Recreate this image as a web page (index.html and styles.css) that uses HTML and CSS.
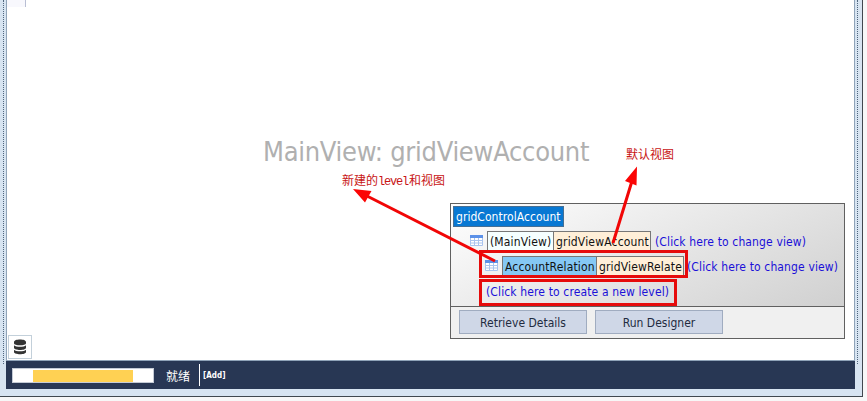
FILE: index.html
```html
<!DOCTYPE html>
<html lang="zh-CN">
<head>
<meta charset="utf-8">
<title>gridControlAccount</title>
<link rel="stylesheet" href="styles.css">
</head>
<body>
<div class="window">
  <main class="surface">
    <div class="tab-edge"></div>
    <h1 class="view-title">MainView: gridViewAccount</h1>
    <button class="data-button" aria-label="Data source">
      <svg width="14" height="16" viewBox="0 0 14 16"><path fill="#333" d="M1 3C1-.3 13-.3 13 3v1.300C13 7 1 7 1 4.300zM1 6.200c2 2 10 2 12 0v2.600c0 3-12 3-12 0zM1 10.800c2 2 10 2 12 0v2.100c0 3-12 3-12 0z"/></svg>
    </button>
    <section class="levels">
      <div class="tree">
        <span class="root">gridControlAccount</span>
        <div class="row main-row">
          <svg class="grid-icon" width="13" height="11"><path fill="#fff" stroke="#a9c4ee" d="M.5.5h12v10H.5zM4.500 3v8M8.500 3v8M1 5.500h12M1 8h12"/><path fill="#5c91e8" d="M0 0h13v3H0z"/></svg>
          <span class="cell name">(MainView)</span><span class="cell view v1">gridViewAccount</span>
          <a class="link">(Click here to change view)</a>
        </div>
        <div class="row child-row">
          <svg class="grid-icon" width="13" height="11"><path fill="#fff" stroke="#a9c4ee" d="M.5.5h12v10H.5zM4.500 3v8M8.500 3v8M1 5.500h12M1 8h12"/><path fill="#5c91e8" d="M0 0h13v3H0z"/></svg>
          <span class="cell relation">AccountRelation</span><span class="cell view v2">gridViewRelate</span>
          <a class="link">(Click here to change view)</a>
        </div>
        <div class="row new-row"><a class="link">(Click here to create a new level)</a></div>
      </div>
      <div class="actions">
        <button>Retrieve Details</button>
        <button>Run Designer</button>
      </div>
    </section>
  </main>
  <footer class="status">
    <div class="progress"><div class="bar"></div></div>
    <span class="ready">就绪</span>
    <span class="mode">[Add]</span>
  </footer>
</div>
<svg class="marks" width="867" height="401" viewBox="0 0 867 401">
  <g fill="none" stroke="#e60b0b" stroke-width="3"><path d="M480.500 251.500h206v25h-206zM480.500 280.500h195v24h-195z"/></g>
  <g stroke="#f10606" stroke-width="3"><path d="M495 261L367 196M613 243L632 181"/></g>
  <path fill="#fb0505" d="M353 189l18.500 2-6.500 11.500zM637 166.500l-12 14.500 11.500 4.500z"/>
</svg>
<span class="note note-new">新建的<span class="latin">level</span>和视图</span>
<span class="note note-default">默认视图</span>
</body>
</html>
```
FILE: styles.css
```css
* { box-sizing: border-box; }
body {
  margin: 0;
  width: 867px;
  height: 401px;
  overflow: hidden;
  position: relative;
  background: #f7f7f7;
  font: 12px/16px "DejaVu Sans Condensed", "Noto Sans CJK SC", sans-serif;
  color: #111;
}
.window {
  width: 863px;
  height: 397px;
  padding: 0 7px 7px 6px;
  border-right: 1px solid #40484f;
  border-bottom: 1px solid #40484f;
  background: #d7e4f1;
  position: relative;
}
.window::before,
.window::after {
  content: "";
  position: absolute;
  top: 0;
  height: 364px;
  border-left: 1px dotted #50657c;
}
.window::before { left: 3px; }
.window::after { right: 4px; }
.surface {
  position: relative;
  height: 361px;
  border: solid #8fa3b8;
  border-width: 0 1px 1px;
  background: #fff;
}
.tab-edge {
  width: 19px;
  height: 7px;
  border-right: 1px solid #b9bfd4;
  background: #f8f8fd;
}
.view-title {
  margin: 0;
  padding: 128px 0 0 256px;
  font-size: 27px;
  line-height: 34px;
  font-weight: 400;
  letter-spacing: -0.280px;
  color: #b0b0b0;
  white-space: nowrap;
}
.data-button {
  position: absolute;
  left: 1px;
  bottom: 1px;
  width: 24px;
  height: 24px;
  padding: 0;
  display: grid;
  place-items: center;
  border: 1px solid #c3d0da;
  background: #fff;
}
.levels {
  position: absolute;
  left: 443px;
  top: 203px;
  width: 395px;
  height: 136px;
  border: 1px solid #606060;
  background: #f0f0f0;
  white-space: nowrap;
}
.tree {
  height: 103px;
  padding: 2px;
  border-bottom: 1px solid #606060;
  background: linear-gradient(155deg, #fff 0%, #eee 35%, #d0d0d0 100%);
}
.root {
  display: flex;
  width: 111px;
  height: 21px;
  padding: 2px 0 0 2px;
  border: 1px solid #466f94;
  background: #0878d3;
  letter-spacing: 0.050px;
  color: #fff;
}
.row { display: flex; height: 21px; margin-top: 4px; }
.main-row { padding-left: 17px; }
.child-row { padding-left: 32px; }
.new-row { padding-left: 33px; }
.grid-icon { margin: 4px 4px 0 0; flex: none; }
.cell {
  height: 20px;
  padding: 2px 0 0 2px;
  border: 1px solid #777;
  flex: none;
  letter-spacing: 0.150px;
}
.name { width: 67px; background: #f5ffff; }
.relation { width: 95px; background: #85c8f4; }
.view { margin-left: -1px; background: #ffefd8; }
.v1 { width: 98px; letter-spacing: 0.180px; }
.v2 { width: 88px; }
.link { padding: 3px 0 0 4px; color: #1a10d8; letter-spacing: 0.130px; }
.child-row .link { padding-left: 3px; }
.new-row .link { padding-left: 0; }
.actions { display: flex; gap: 8px; padding: 3px 8px; }
.actions button {
  width: 128px;
  height: 24px;
  padding: 1px 0 0;
  border: 1px solid #a0acc0;
  background: #cfd7e7;
  font: inherit;
  color: #222b40;
}
.status {
  display: flex;
  height: 28px;
  padding: 3px 6px;
  background: #283754;
  color: #fff;
}
.progress {
  width: 142px;
  height: 15px;
  margin-top: 4px;
  padding: 1px 20px;
  border: 1px solid #c4cbd6;
  background: #fff;
}
.bar { height: 12px; width: 100px; background: #ffd153; }
.ready {
  width: 46px;
  padding: 4px 0 0 12px;
  font-family: "Noto Sans CJK SC", sans-serif;
}
.mode {
  height: 22px;
  border-left: 1px solid #fff;
  padding: 4px 0 0 3px;
  margin-left: -1px;
  font: bold 8px/16px "DejaVu Sans Condensed", sans-serif;
}
.marks { position: absolute; left: 0; top: 0; }
.note {
  position: absolute;
  font: 12px/16px "Noto Sans CJK SC", sans-serif;
  color: #c81414;
  white-space: nowrap;
}
.latin {
  font-family: "Liberation Mono", monospace;
  letter-spacing: -1.200px;
  padding-right: 1px;
}
.note-new { left: 342px; top: 172px; }
.note-default { left: 626px; top: 146px; }
```
